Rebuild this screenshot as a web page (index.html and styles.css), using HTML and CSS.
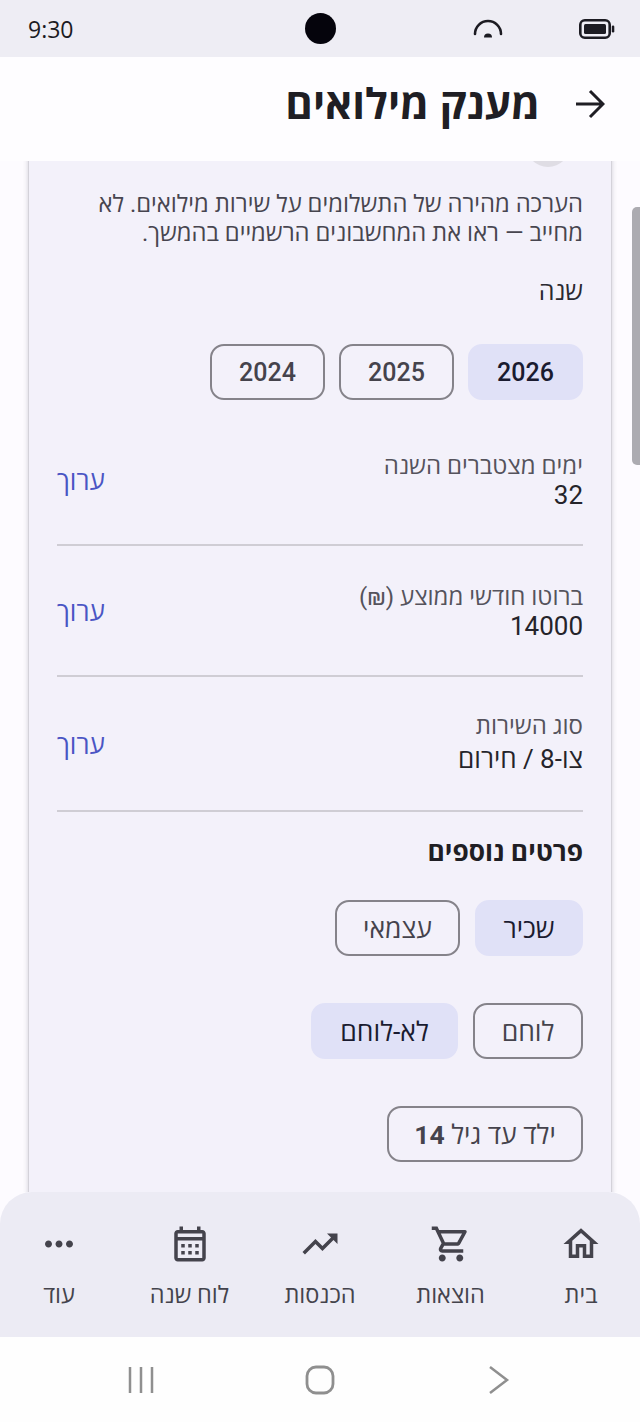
FILE: index.html
```html
<!DOCTYPE html>
<html lang="he" dir="rtl">
<head>
<meta charset="utf-8">
<title>מענק מילואים</title>
<link rel="stylesheet" href="styles.css">
</head>
<body>
<div class="status" dir="ltr">
  <span class="clock">9:30</span>
  <span class="camera"></span>
  <div class="status-icons">
    <svg class="ico-signal" viewBox="0 0 30 20"><path d="M2 15A13 13 0 0 1 28 15" fill="none" stroke="#1c1b22" stroke-width="2.600" stroke-linecap="round"/><path d="M11 18.500a4 4 0 0 1 8 0z" fill="#1c1b22"/></svg>
    <svg class="ico-battery" viewBox="0 0 36 20"><rect x="1.300" y="1.300" width="29.400" height="17.400" rx="4.500" fill="none" stroke="#1c1b22" stroke-width="2.600"/><rect x="5" y="5" width="22" height="10" rx="1.500" fill="#1c1b22"/><rect x="32.800" y="6.500" width="2.500" height="7" rx="1.200" fill="#1c1b22"/></svg>
  </div>
</div>
<header class="topbar">
  <svg class="back" viewBox="0 0 30 30"><path d="M1 15H28M15 2L28 15L15 28" fill="none" stroke="#1f1e24" stroke-width="3"/></svg>
  <h1>מענק מילואים</h1>
</header>
<main class="scroller">
  <section class="card">
    <span class="card-badge"></span>
    <p class="intro">הערכה מהירה של התשלומים על שירות מילואים. לא מחייב — ראו את המחשבונים הרשמיים בהמשך.</p>
    <div class="field-title">שנה</div>
    <div class="chips years">
      <button class="chip on">2026</button>
      <button class="chip">2025</button>
      <button class="chip">2024</button>
    </div>
    <div class="row first">
      <div><div class="label">ימים מצטברים השנה</div><div class="value">32</div></div>
      <a class="edit">ערוך</a>
    </div>
    <div class="row">
      <div><div class="label">ברוטו חודשי ממוצע (₪)</div><div class="value">14000</div></div>
      <a class="edit">ערוך</a>
    </div>
    <div class="row tall">
      <div><div class="label">סוג השירות</div><div class="value heb">צו-8 / חירום</div></div>
      <a class="edit">ערוך</a>
    </div>
    <h2 class="more">פרטים נוספים</h2>
    <div class="chips text-chips">
      <button class="chip w108 on">שכיר</button>
      <button class="chip w125">עצמאי</button>
    </div>
    <div class="chips text-chips">
      <button class="chip w110">לוחם</button>
      <button class="chip w147 on">לא-לוחם</button>
    </div>
    <div class="chips text-chips">
      <button class="chip w196">ילד עד גיל <b>14</b></button>
    </div>
  </section>
  <div class="scrollthumb"></div>
</main>
<nav class="tabs">
  <a class="tab"><svg viewBox="0 0 24 24"><path d="M12 5.690l5 4.500V18h-2v-6H9v6H7v-7.810l5-4.500M12 3L2 12h3v8h6v-6h2v6h6v-8h3L12 3z"/></svg><span>בית</span></a>
  <a class="tab"><svg viewBox="0 0 24 24"><path d="M15.550 13c.75 0 1.410-.41 1.750-1.030l3.580-6.490c.37-.66-.11-1.480-.87-1.480H5.210l-.94-2H1v2h2l3.600 7.590-1.350 2.440C4.520 15.370 5.480 17 7 17h12v-2H7l1.100-2h7.450zM6.160 6h12.150l-2.760 5H8.530L6.160 6zM7 18c-1.100 0-1.990.9-1.990 2S5.900 22 7 22s2-.9 2-2-.9-2-2-2zm10 0c-1.100 0-1.990.9-1.990 2s.89 2 1.990 2 2-.9 2-2-.9-2-2-2z"/></svg><span>הוצאות</span></a>
  <a class="tab"><svg viewBox="0 0 24 24"><path d="M16 6l2.290 2.290-4.880 4.880-4-4L2 16.590 3.410 18l6-6 4 4 6.300-6.290L22 12V6z"/></svg><span>הכנסות</span></a>
  <a class="tab"><svg viewBox="0 0 24 24"><path d="M19 4h-1V2h-2v2H8V2H6v2H5c-1.100 0-2 .9-2 2v14c0 1.100.9 2 2 2h14c1.100 0 2-.9 2-2V6c0-1.100-.9-2-2-2zm0 16H5V10h14v10zm0-12H5V6h14v2zM9 14H7v-2h2v2zm4 0h-2v-2h2v2zm4 0h-2v-2h2v2zm-8 4H7v-2h2v2zm4 0h-2v-2h2v2zm4 0h-2v-2h2v2z"/></svg><span>לוח שנה</span></a>
  <a class="tab"><svg viewBox="0 0 24 24"><path d="M6 10c-1.100 0-2 .9-2 2s.9 2 2 2 2-.9 2-2-.9-2-2-2zm12 0c-1.100 0-2 .9-2 2s.9 2 2 2 2-.9 2-2-.9-2-2-2zm-6 0c-1.100 0-2 .9-2 2s.9 2 2 2 2-.9 2-2-.9-2-2-2z"/></svg><span>עוד</span></a>
</nav>
<div class="sysbar" dir="ltr">
  <svg class="sys" viewBox="0 0 30 30"><path d="M5 2V28M16 2V28M27 2V28" fill="none" stroke="#8f8f8f" stroke-width="2.500"/></svg>
  <svg class="sys" viewBox="0 0 30 30"><rect x="2" y="2" width="26" height="26" rx="9" fill="none" stroke="#8f8f8f" stroke-width="2.800"/></svg>
  <svg class="sys" viewBox="0 0 30 30"><path d="M5 2L22 15L5 28" fill="none" stroke="#8f8f8f" stroke-width="2.500"/></svg>
</div>
</body>
</html>
```

FILE: styles.css
```css
* { box-sizing: border-box; }

html, body { margin: 0; height: 1422px; overflow: hidden; }

body {
  display: flex;
  flex-direction: column;
  background: #fdfbff;
  color: #1f1e24;
  font-family: Roboto, "Open Sans", "Noto Sans", "Liberation Sans", sans-serif;
}

/* Device status strip */
.status {
  height: 57px;
  flex: none;
  background: #eeedf4;
  display: grid;
  grid-template-columns: 1fr auto 1fr;
  align-items: center;
  padding: 0 25px 0 28px;
}
.clock { font-size: 23px; color: #1c1b22; font-family: "Open Sans", sans-serif; }
.camera { width: 31px; height: 31px; border-radius: 50%; background: #05040c; margin-right: 3px; }
.status-icons { display: flex; justify-content: flex-end; align-items: center; gap: 76px; }
.ico-signal { width: 30px; height: 20px; }
.ico-battery { width: 36px; height: 20px; }

/* App bar */
.topbar {
  height: 104px;
  flex: none;
  background: #fefdff;
  display: flex;
  align-items: center;
  padding: 0 35px 0 0;
  position: relative;
  z-index: 2;
}
.back { width: 30px; height: 30px; flex: none; margin-bottom: 10px; }
h1 { margin: 0 35px 0 0; font-size: 42px; font-weight: 700; line-height: 1; padding-bottom: 8px; }

/* Scrolling content */
.scroller { flex: 1; min-height: 0; overflow: hidden; position: relative; }
.card {
  margin: -40px 28px 0;
  padding: 0 28px 60px;
  background: #f3f1fa;
  border: 1px solid #d4d2da;
  box-shadow: 0 1px 5px rgba(60, 55, 80, .22);
}
.card-badge {
  display: block;
  width: 44px;
  height: 44px;
  margin: 1px 13px 0 0;
  border-radius: 50%;
  background: #dfdde4;
}
.intro { margin: 23px 0 0; font-size: 23.800px; line-height: 29px; color: #47454f; }
.field-title { margin-top: 28px; font-size: 25px; line-height: 32px; color: #2a2930; }

.chips { display: flex; gap: 14px; }
.years { margin-top: 36px; }
.chip {
  height: 56px;
  width: 115px;
  padding: 0;
  border: 2px solid #85838a;
  border-radius: 14px;
  background: transparent;
  color: #45434c;
  font: 500 25px Roboto, "Open Sans", sans-serif;
}
.chip.on { border-color: #e0e1f7; background: #e0e1f7; color: #1a1b30; }
.chip b { font-weight: 700; }

.row {
  display: flex;
  justify-content: space-between;
  align-items: center;
  border-bottom: 2px solid #cfcdd4;
  height: 131px;
  padding-top: 2px;
}
.row.first { margin-top: 15px; }
.row.tall { height: 135px; }
.label { font-size: 24px; line-height: 29px; color: #55535c; }
.value { font-size: 26px; line-height: 29px; color: #25242a; }
.value.heb { line-height: 37px; }
.edit { font-size: 26px; color: #4a55c4; margin-bottom: 2px; }

.more { margin: 24px 0 0; font-size: 26.300px; line-height: 32px; font-weight: 700; color: #1f1e24; }
.text-chips { margin-top: 47px; gap: 15px; }
.more + .text-chips { margin-top: 32px; }
.text-chips .chip { font-size: 26.500px; font-weight: 400; }
.w108 { width: 108px; }
.w125 { width: 125px; }
.w110 { width: 110px; }
.w147 { width: 147px; }
.w196 { width: 196px; }

.scrollthumb {
  position: absolute;
  top: 46px;
  left: 632px;
  width: 8px;
  height: 258px;
  border-radius: 5px 0 0 5px;
  background: #acabb1;
}

/* Bottom navigation */
.tabs {
  flex: none;
  height: 145px;
  position: relative;
  z-index: 3;
  padding-top: 31px;
  background: #ecebf4;
  border-radius: 32px 32px 0 0;
  display: grid;
  grid-template-columns: repeat(5, 118px);
  column-gap: 12.500px;
}
.tab { display: flex; flex-direction: column; align-items: center; gap: 16px; color: #44434c; }
.tab svg { width: 42px; height: 42px; fill: #44434c; }
.tab span { font-size: 23.500px; line-height: 28px; }

/* System navigation */
.sysbar {
  height: 85px;
  flex: none;
  background: #fefefe;
  display: grid;
  grid-template-columns: repeat(3, 30px);
  justify-content: center;
  column-gap: 150px;
  padding-top: 28px;
}
.sys { width: 30px; height: 30px; }
```
